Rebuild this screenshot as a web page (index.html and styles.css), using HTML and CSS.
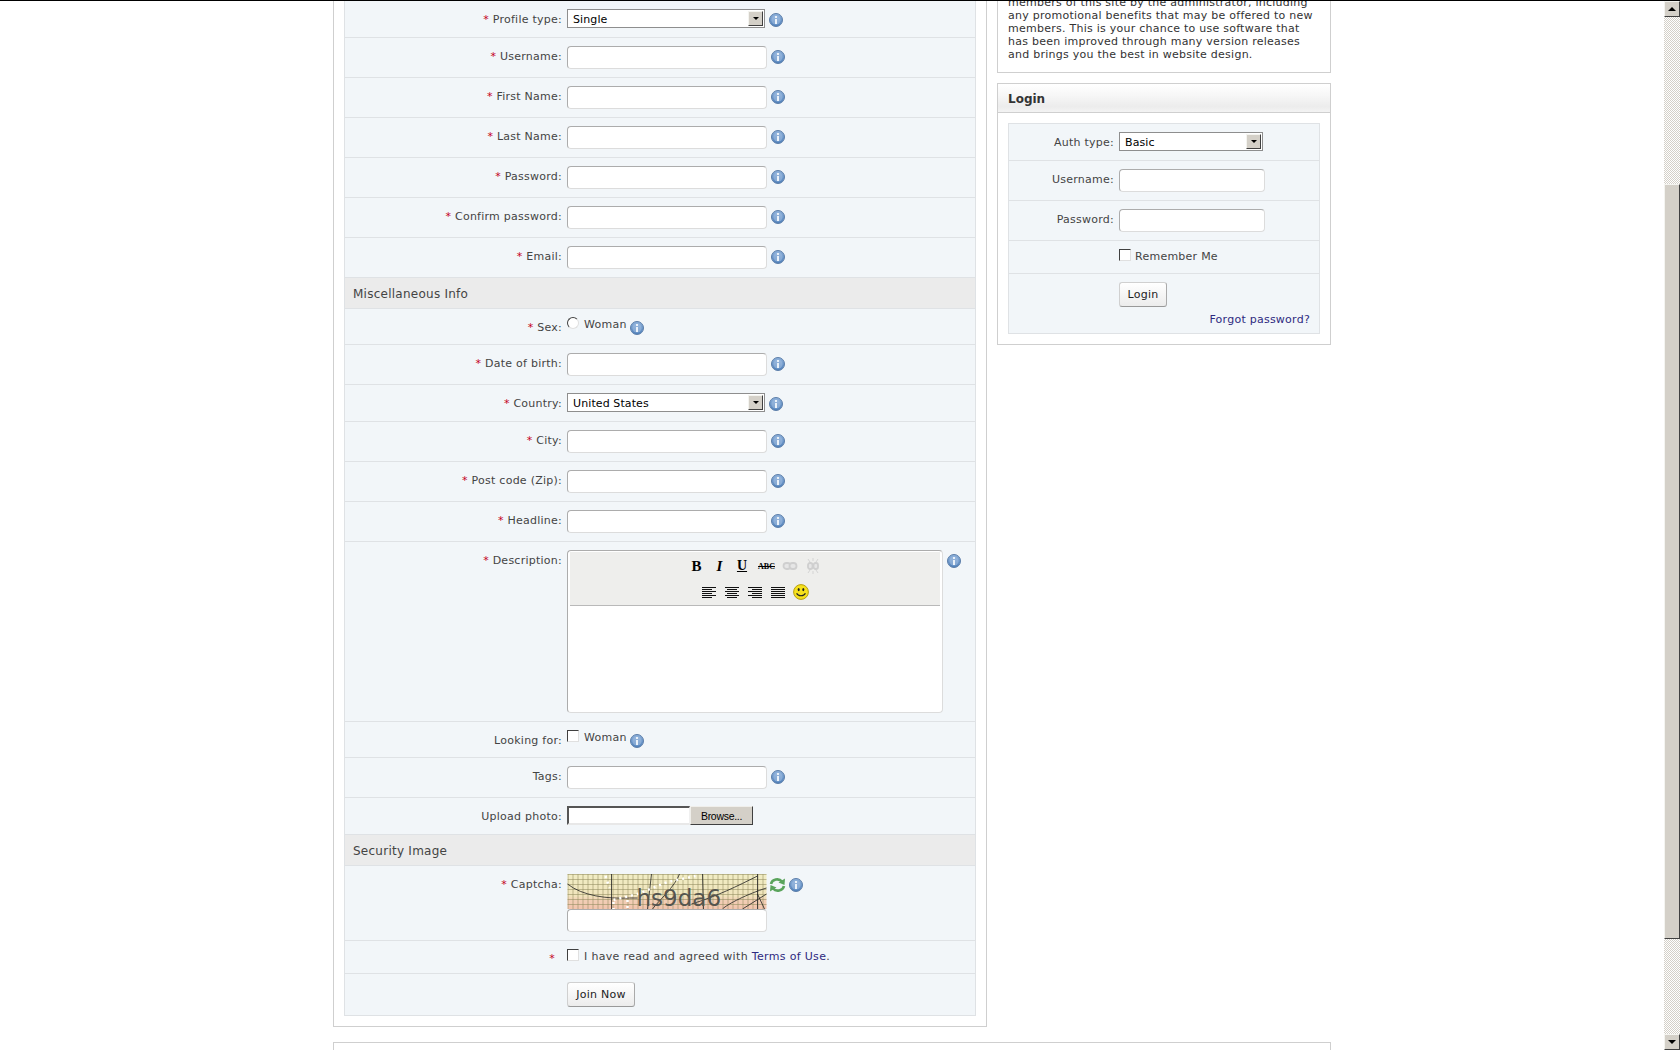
FILE: index.html
```html
<!DOCTYPE html>
<html lang="en">
<head>
<meta charset="utf-8">
<title>Join</title>
<link rel="stylesheet" href="styles.css">
</head>
<body>
<svg class="defs" width="0" height="0" aria-hidden="true">
  <defs>
    <linearGradient id="ig" x1="0" y1="0" x2="0" y2="1"><stop offset="0" stop-color="#8fb2dc"/><stop offset="1" stop-color="#4f80ba"/></linearGradient>
    <linearGradient id="cg" x1="0" y1="0" x2="0" y2="1"><stop offset="0" stop-color="#f1edc4"/><stop offset=".62" stop-color="#f0e4bc"/><stop offset=".75" stop-color="#f2cfb6"/><stop offset="1" stop-color="#f2c4ae"/></linearGradient>
    <pattern id="grid" width="5" height="5" patternUnits="userSpaceOnUse"><path d="M0 .5H5M.5 0V5" stroke="#8f8a5c" stroke-width="1" fill="none" opacity=".55"/></pattern>
    <symbol id="info" viewBox="0 0 14 14">
      <circle cx="7" cy="7" r="6.5" fill="url(#ig)" stroke="#5c7ea9"/>
      <circle cx="7" cy="7" r="4.6" fill="#a9c4e4" opacity=".5"/>
      <rect x="6" y="3" width="2" height="2" fill="#eaf1f9"/>
      <rect x="6" y="6" width="2" height="5" fill="#eaf1f9"/>
    </symbol>
  </defs>
</svg>
<div class="window">
  <div class="page">
    <div class="wrap">
      <div class="columns">
        <main class="panel main-panel">
          <form class="form">
            <div class="row"><div class="lbl"><span class="req">*</span> Profile type:</div><div class="ctl ctl-sel"><span class="select"><select class="sel w198"><option>Single</option></select><span class="sel-btn"><i></i></span></span><svg class="info info-s"><use href="#info"/></svg></div></div>
            <div class="row"><div class="lbl"><span class="req">*</span> Username:</div><div class="ctl"><input class="txt w200" type="text"><svg class="info"><use href="#info"/></svg></div></div>
            <div class="row"><div class="lbl"><span class="req">*</span> First Name:</div><div class="ctl"><input class="txt w200" type="text"><svg class="info"><use href="#info"/></svg></div></div>
            <div class="row"><div class="lbl"><span class="req">*</span> Last Name:</div><div class="ctl"><input class="txt w200" type="text"><svg class="info"><use href="#info"/></svg></div></div>
            <div class="row"><div class="lbl"><span class="req">*</span> Password:</div><div class="ctl"><input class="txt w200" type="text"><svg class="info"><use href="#info"/></svg></div></div>
            <div class="row"><div class="lbl"><span class="req">*</span> Confirm password:</div><div class="ctl"><input class="txt w200" type="text"><svg class="info"><use href="#info"/></svg></div></div>
            <div class="row"><div class="lbl"><span class="req">*</span> Email:</div><div class="ctl"><input class="txt w200" type="text"><svg class="info"><use href="#info"/></svg></div></div>
            <div class="head">Miscellaneous Info</div>
            <div class="row"><div class="lbl"><span class="req">*</span> Sex:</div><div class="ctl choice"><input class="radio" type="radio"><span class="opt">Woman</span><svg class="info info-c"><use href="#info"/></svg></div></div>
            <div class="row"><div class="lbl"><span class="req">*</span> Date of birth:</div><div class="ctl"><input class="txt w200" type="text"><svg class="info"><use href="#info"/></svg></div></div>
            <div class="row"><div class="lbl"><span class="req">*</span> Country:</div><div class="ctl ctl-sel"><span class="select"><select class="sel w198"><option>United States</option></select><span class="sel-btn"><i></i></span></span><svg class="info info-s"><use href="#info"/></svg></div></div>
            <div class="row"><div class="lbl"><span class="req">*</span> City:</div><div class="ctl"><input class="txt w200" type="text"><svg class="info"><use href="#info"/></svg></div></div>
            <div class="row"><div class="lbl"><span class="req">*</span> Post code (Zip):</div><div class="ctl"><input class="txt w200" type="text"><svg class="info"><use href="#info"/></svg></div></div>
            <div class="row"><div class="lbl"><span class="req">*</span> Headline:</div><div class="ctl"><input class="txt w200" type="text"><svg class="info"><use href="#info"/></svg></div></div>
            <div class="row"><div class="lbl"><span class="req">*</span> Description:</div><div class="ctl top">
              <div class="editor">
                <div class="toolbar">
                  <div class="tools">
                    <span class="tool t-b">B</span><span class="tool t-i">I</span><span class="tool t-u">U</span><span class="tool t-s">ABC</span>
                    <span class="tool"><svg class="ti" viewBox="0 0 16 12"><rect x="1.5" y="3" width="7" height="6" rx="3" fill="#e6e6e6" stroke="#cfcfcf" stroke-width="1.8"/><rect x="7.5" y="3" width="7" height="6" rx="3" fill="#e6e6e6" stroke="#cfcfcf" stroke-width="1.8"/></svg></span>
                    <span class="tool"><svg class="ti ti-u" viewBox="0 0 16 16"><path d="M8 0v3M3 1l2 3M13 1l-2 3M8 13v3M3 15l2-3M13 15l-2-3" stroke="#d4d4d4" fill="none"/><rect x="3" y="5" width="4.5" height="6" rx="2" fill="#e6e6e6" stroke="#cfcfcf" stroke-width="1.8"/><rect x="8.5" y="5" width="4.5" height="6" rx="2" fill="#e6e6e6" stroke="#cfcfcf" stroke-width="1.8"/></svg></span>
                  </div>
                  <div class="tools">
                    <span class="tool"><svg class="ta" viewBox="0 0 14 11"><path d="M0 .5H14M0 2.5H10M0 4.5H14M0 6.5H10M0 8.5H14M0 10.5H10" stroke="#111" fill="none"/></svg></span>
                    <span class="tool"><svg class="ta" viewBox="0 0 14 11"><path d="M0 .5H14M2 2.5H12M0 4.5H14M2 6.5H12M0 8.5H14M2 10.5H12" stroke="#111" fill="none"/></svg></span>
                    <span class="tool"><svg class="ta" viewBox="0 0 14 11"><path d="M0 .5H14M4 2.5H14M0 4.5H14M4 6.5H14M0 8.5H14M4 10.5H14" stroke="#111" fill="none"/></svg></span>
                    <span class="tool"><svg class="ta" viewBox="0 0 14 11"><path d="M0 .5H14M0 2.5H14M0 4.5H14M0 6.5H14M0 8.5H14M0 10.5H14" stroke="#111" fill="none"/></svg></span>
                    <span class="tool"><svg class="smile" viewBox="0 0 16 16"><circle cx="8" cy="8" r="7.4" fill="#f6e11c" stroke="#b79f12"/><ellipse cx="5.7" cy="5.6" rx="1" ry="1.6" fill="#222"/><ellipse cx="10.3" cy="5.6" rx="1" ry="1.6" fill="#222"/><path d="M3.6 9.3C5 12.6 11 12.6 12.4 9.3" fill="none" stroke="#222" stroke-width="1.1"/></svg></span>
                  </div>
                </div>
              </div>
              <svg class="info info-e"><use href="#info"/></svg>
            </div></div>
            <div class="row"><div class="lbl">Looking for:</div><div class="ctl choice"><input class="check" type="checkbox"><span class="opt">Woman</span><svg class="info info-c"><use href="#info"/></svg></div></div>
            <div class="row"><div class="lbl">Tags:</div><div class="ctl"><input class="txt w200" type="text"><svg class="info"><use href="#info"/></svg></div></div>
            <div class="row"><div class="lbl">Upload photo:</div><div class="ctl upload"><span class="file"></span><button class="browse" type="button">Browse...</button></div></div>
            <div class="head">Security Image</div>
            <div class="row"><div class="lbl"><span class="req">*</span> Captcha:</div><div class="ctl top">
              <div class="cap-col">
                <svg class="captcha" viewBox="0 0 199 35">
                  <rect width="199" height="35" fill="url(#cg)"/>
                  <rect width="199" height="35" fill="url(#grid)"/>
                  <path d="M0 10C15 22 40 25 62 24H70M44 0V35M84 0L80 35M112 0C108 12 90 28 85 35M135 0L136 35M199 14C180 20 160 30 155 35M190 0V35M190 2C170 12 150 22 124 30M199 20L175 35M190 20L197 35" fill="none" stroke="#222" stroke-width=".8"/>
                  <path d="M38 2L42 14M46 26L70 20L100 8L128 2M46 28V35M60 26V35" fill="none" stroke="#fff" stroke-width="2.5" stroke-dasharray="2 4"/>
                  <text x="69" y="32" class="cap-text">hs9da6</text>
                </svg>
                <input class="txt w200" type="text">
              </div>
              <svg class="refresh" viewBox="0 0 17 16"><path d="M2 7C3 2 10 1 13 4.5" fill="none" stroke="#5aa45c" stroke-width="2.6"/><path d="M16 1.5L15.5 8L9.5 5.5Z" fill="#5aa45c"/><path d="M15 9C14 14 7 15 4 11.5" fill="none" stroke="#5aa45c" stroke-width="2.6"/><path d="M1 14.5L1.5 8L7.5 10.5Z" fill="#5aa45c"/></svg>
              <svg class="info info-r"><use href="#info"/></svg>
            </div></div>
            <div class="row"><div class="lbl lbl-t"><span class="req">*</span></div><div class="ctl choice choice-t"><input class="check" type="checkbox"><span class="opt opt-terms">I have read and agreed with <a class="link" href="#">Terms of Use</a>.</span></div></div>
            <div class="row"><div class="lbl"></div><div class="ctl"><button class="btn btn-join" type="button">Join Now</button></div></div>
          </form>
        </main>
        <aside class="side">
          <section class="panel intro">
            <p class="intro-text">members of this site by the administrator, including<br>any promotional benefits that may be offered to new<br>members. This is your chance to use software that<br>has been improved through many version releases<br>and brings you the best in website design.</p>
          </section>
          <section class="panel login">
            <h2 class="login-head">Login</h2>
            <div class="login-body">
              <form class="form">
                <div class="row"><div class="lbl lbl-s">Auth type:</div><div class="ctl ctl-sel"><span class="select"><select class="sel w144"><option>Basic</option></select><span class="sel-btn"><i></i></span></span></div></div>
                <div class="row"><div class="lbl lbl-s">Username:</div><div class="ctl"><input class="txt w146" type="text"></div></div>
                <div class="row"><div class="lbl lbl-s">Password:</div><div class="ctl"><input class="txt w146" type="text"></div></div>
                <div class="row"><div class="lbl lbl-s"></div><div class="ctl choice choice-t"><input class="check" type="checkbox"><span class="opt">Remember Me</span></div></div>
                <div class="row last">
                  <div class="lbl lbl-s"></div>
                  <div class="ctl login-actions"><button class="btn btn-login" type="button">Login</button><a class="link forgot" href="#">Forgot password?</a></div>
                </div>
              </form>
            </div>
          </section>
        </aside>
      </div>
      <div class="panel footer-panel"></div>
    </div>
  </div>
  <div class="scrollbar">
    <div class="sb-btn"><i class="up"></i></div>
    <div class="sb-track sb-a"></div>
    <div class="sb-thumb"></div>
    <div class="sb-track sb-b"></div>
    <div class="sb-btn"><i class="down"></i></div>
  </div>
</div>
</body>
</html>
```
FILE: styles.css
```css
* { box-sizing: border-box; }
html, body { margin: 0; padding: 0; height: 100%; background: #fff; }
body { font: 11px/13px "DejaVu Sans", Verdana, sans-serif; letter-spacing: .25px; color: #333; overflow: hidden; }
.defs { position: absolute; }
.window { display: flex; height: 1050px; border-top: 1px solid #000; overflow: hidden; }
.page { flex: 1; min-width: 0; overflow: hidden; }
.wrap { width: 998px; margin: 0 auto; }
.columns { display: flex; gap: 10px; align-items: flex-start; }
.panel { border: 1px solid #cfcfcf; background: #fff; }
.main-panel { width: 654px; border-top: 0; padding: 0 10px 10px; }
.side { width: 334px; display: flex; flex-direction: column; gap: 10px; }
.form { background: #f2f6f9; border: 1px solid #dfe2e5; border-top: 0; }
.main-panel .form { width: 632px; }
.row { display: flex; border-bottom: 1px solid #dfe2e5; }
.row:last-child { border-bottom: 0; }
.lbl { width: 217px; flex: none; text-align: right; padding-top: 12px; color: #444; }
.lbl-s { width: 105px; }
.lbl-t { padding-right: 7px; padding-top: 11px; }
.req { color: #c40020; }
.ctl { flex: 1; display: flex; align-items: center; padding: 8px 0 8px 5px; min-width: 0; }
.ctl-sel { padding-bottom: 9px; }
.top { align-items: flex-start; }
.txt { height: 23px; border: 1px solid; border-color: #acacac #dcdcdc #dcdcdc #acacac; border-radius: 4px; background: #fff; padding: 0 4px; display: block; }
.w200 { width: 200px; }
.w146 { width: 146px; }
.select { position: relative; display: block; height: 19px; }
.sel { appearance: none; -webkit-appearance: none; height: 19px; border: 1px solid #8e8e8e; border-radius: 0; background: #fff; color: #000; font: 11px "DejaVu Sans", Verdana, sans-serif; letter-spacing: .1px; padding: 1px 0 0 5px; display: block; }
.w198 { width: 198px; }
.w144 { width: 144px; }
.sel-btn { position: absolute; right: 2px; top: 2px; width: 15px; height: 15px; background: #d4d0c8; border: 1px solid; border-color: #f4f4f0 #404040 #404040 #f4f4f0; display: flex; align-items: center; justify-content: center; }
.sel-btn i { width: 0; height: 0; border: 3px solid transparent; border-top: 3px solid #000; border-bottom: 0; }
.info { width: 14px; height: 14px; margin-left: 4px; margin-bottom: 1px; flex: none; }
.info-s { margin-left: 4px; margin-top: 3px; margin-bottom: 0; }
.info-c { margin-left: 3px; margin-top: 4px; margin-bottom: 0; }
.info-e { margin: 4px 0 0 4px; }
.info-r { margin: 4px 0 0 3px; }
.choice { align-items: flex-start; padding-bottom: 9px; }
.choice-t { padding-bottom: 10px; }
.radio, .check { appearance: none; -webkit-appearance: none; margin: 0; width: 12px; height: 12px; flex: none; background: #fff; border: 1px solid; border-color: #404040 #e0e0e0 #e0e0e0 #404040; }
.radio { border-radius: 50%; }
.opt { margin-left: 5px; margin-top: 1px; color: #444; }
.choice-t .opt { margin-left: 4px; margin-top: 1px; }
.choice-t .opt-terms { margin-left: 5px; letter-spacing: .33px; }
.head { height: 31px; background: #ebebeb; border-bottom: 1px solid #dfe2e5; padding: 9px 0 0 8px; font-size: 12px; line-height: 15px; color: #444; }
.editor { width: 376px; height: 163px; border: 1px solid; border-color: #acacac #dcdcdc #dcdcdc #acacac; border-radius: 4px; background: #fff; padding: 1px 2px 0; }
.toolbar { height: 54px; background: #eeeeec; border-bottom: 1px solid #b9b9b9; padding-top: 2px; }
.tools { display: flex; justify-content: center; height: 24px; }
.tools + .tools { margin-top: 2px; }
.tool { width: 23px; height: 24px; display: flex; align-items: center; justify-content: center; color: #000; letter-spacing: 0; }
.t-b { font: bold 15px "Liberation Serif", serif; padding-right: 2px; }
.t-i { font: italic bold 15px "Liberation Serif", serif; padding-right: 2px; }
.t-u { font: bold 14px "Liberation Serif", serif; text-decoration: underline; padding-right: 3px; }
.t-s { font: bold 8px "Liberation Serif", serif; text-decoration: line-through; }
.ti { width: 16px; height: 12px; }
.ti-u { width: 16px; height: 16px; }
.ta { width: 14px; height: 11px; }
.smile { width: 16px; height: 16px; }
.cap-col { width: 200px; }
.captcha { display: block; width: 200px; height: 35px; }
.cap-text { font: 23px "DejaVu Sans", sans-serif; letter-spacing: 0; fill: #55554f; }
.refresh { width: 17px; height: 16px; margin: 3px 0 0 2px; flex: none; }
.upload { padding-bottom: 9px; }
.file { width: 123px; height: 19px; background: #fff; border: solid; border-color: #555 #f0f0f0 #e8e8e8 #555; border-width: 2px 1px 2px 2px; display: block; }
.browse { width: 63px; height: 19px; margin-left: 0; padding: 0; background: #d4d0c8; border: 1px solid; border-color: #f0efeb #404040 #404040 #f0efeb; font: 10.5px "Liberation Sans", Arial, sans-serif; letter-spacing: -.3px; color: #000; }
.btn { height: 25px; padding: 0; border: 1px solid; border-color: #d0d0d0 #aaa #999 #d0d0d0; border-radius: 3px; background: linear-gradient(#fff, #ececec); font: 11px "DejaVu Sans", Verdana, sans-serif; letter-spacing: .25px; color: #222; display: block; }
.btn-join { width: 68px; }
.btn-login { width: 48px; }
.link { color: #2e2a80; text-decoration: none; }
.intro { border-top: 0; height: 72px; overflow: hidden; padding: 0 10px; }
.intro-text { margin: -5px 0 0; color: #333; }
.login { height: 262px; }
.login-head { margin: 0; height: 29px; border-bottom: 1px solid #cfcfcf; background: linear-gradient(#fff 0, #f7f7f7 40%, #ececec 80%, #f3f3f3 100%); font: bold 12px/15px "DejaVu Sans", Verdana, sans-serif; letter-spacing: 0; color: #333; padding: 8px 0 0 10px; }
.login-body { padding: 10px; }
.login-body .form { width: 312px; border-top: 1px solid #dfe2e5; }
.login-actions { display: block; padding: 8px 9px 7px 5px; }
.forgot { display: block; text-align: right; margin-top: 6px; }
.footer-panel { height: 20px; margin-top: 15px; border-bottom: 0; }
.scrollbar { width: 16px; flex: none; display: flex; flex-direction: column; }
.sb-btn { height: 16px; flex: none; background: #d4d0c8; border: 1px solid; border-color: #f4f4f0 #404040 #404040 #f4f4f0; display: flex; align-items: center; justify-content: center; }
.up { width: 0; height: 0; border: 4px solid transparent; border-bottom: 4px solid #000; border-top: 0; }
.down { width: 0; height: 0; border: 4px solid transparent; border-top: 4px solid #000; border-bottom: 0; }
.sb-track { background: conic-gradient(#d4d0c8 25%, #fff 0 50%, #d4d0c8 0 75%, #fff 0) 0 0 / 2px 2px; }
.sb-a { height: 167px; flex: none; }
.sb-b { flex: 1; }
.sb-thumb { height: 755px; flex: none; background: #d4d0c8; border: 1px solid; border-color: #f4f4f0 #404040 #404040 #f4f4f0; }
```
